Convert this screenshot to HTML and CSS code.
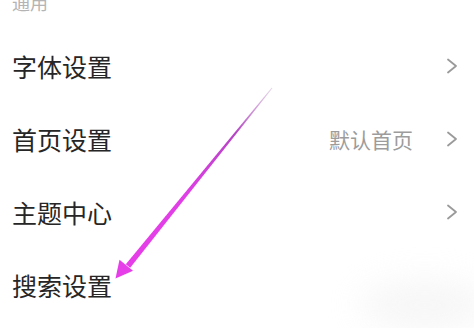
FILE: index.html
```html
<!DOCTYPE html>
<html lang="zh-CN">
<head>
<meta charset="utf-8">
<title>设置</title>
<link rel="stylesheet" href="styles.css">
</head>
<body>
<div class="page">
  <div class="section-title">通用</div>
  <ul class="list">
    <li class="row">
      <span class="label">字体设置</span>
      <span class="right">
        <svg class="chev" width="12" height="16" viewBox="0 0 12 16"><polyline points="2,1.5 10,8 2,14.5" fill="none" stroke="#9a9a9a" stroke-width="1.8" stroke-linecap="round" stroke-linejoin="round"/></svg>
      </span>
    </li>
    <li class="row">
      <span class="label">首页设置</span>
      <span class="right">
        <span class="value">默认首页</span>
        <svg class="chev" width="12" height="16" viewBox="0 0 12 16"><polyline points="2,1.5 10,8 2,14.5" fill="none" stroke="#9a9a9a" stroke-width="1.8" stroke-linecap="round" stroke-linejoin="round"/></svg>
      </span>
    </li>
    <li class="row">
      <span class="label">主题中心</span>
      <span class="right">
        <svg class="chev" width="12" height="16" viewBox="0 0 12 16"><polyline points="2,1.5 10,8 2,14.5" fill="none" stroke="#9a9a9a" stroke-width="1.8" stroke-linecap="round" stroke-linejoin="round"/></svg>
      </span>
    </li>
    <li class="row">
      <span class="label">搜索设置</span>
    </li>
  </ul>
  <div class="smudge"></div>
  <svg class="arrow" width="474" height="328" viewBox="0 0 474 328">
    <defs>
      <linearGradient id="shaft" x1="272" y1="88" x2="128" y2="266" gradientUnits="userSpaceOnUse">
        <stop offset="0" stop-color="#d9c4dc" stop-opacity="0.7"/>
        <stop offset="0.25" stop-color="#b444c4"/>
        <stop offset="0.6" stop-color="#e03ee6"/>
        <stop offset="1" stop-color="#e63ee8"/>
      </linearGradient>
    </defs>
    <polygon points="272.4,88.3 271.6,87.7 125.8,264.2 130.2,267.8" fill="url(#shaft)"/>
    <polygon points="115.5,278.5 119.5,259.8 133,270.8" fill="#e63ee8"/>
  </svg>
</div>
</body>
</html>
```

FILE: styles.css
```css
html, body {
  margin: 0;
  padding: 0;
  background: #ffffff;
}

.page {
  position: relative;
  width: 474px;
  height: 328px;
  overflow: hidden;
  font-family: "Noto Sans CJK SC", "Noto Sans", sans-serif;
}

.section-title {
  font-size: 18px;
  line-height: 20px;
  height: 20px;
  margin-top: -8px;
  margin-bottom: 17.5px;
  padding-left: 12px;
  color: #b4b4b4;
}

.list {
  list-style: none;
  margin: 0;
  padding: 0;
}

.row {
  display: flex;
  align-items: center;
  justify-content: space-between;
  height: 73px;
  padding: 0 16px 0 12px;
}

.label {
  font-size: 25px;
  line-height: 30px;
  color: #262626;
}

.right {
  display: flex;
  align-items: center;
  gap: 33px;
}

.value {
  font-size: 21px;
  line-height: 26px;
  color: #9c9c9c;
}

.chev {
  display: block;
}

.smudge {
  position: absolute;
  left: 360px;
  top: 280px;
  width: 130px;
  height: 50px;
  border-radius: 50%;
  background: #ececec;
  filter: blur(16px);
  opacity: 0.45;
}

.arrow {
  position: absolute;
  left: 0;
  top: 0;
  pointer-events: none;
}
```
